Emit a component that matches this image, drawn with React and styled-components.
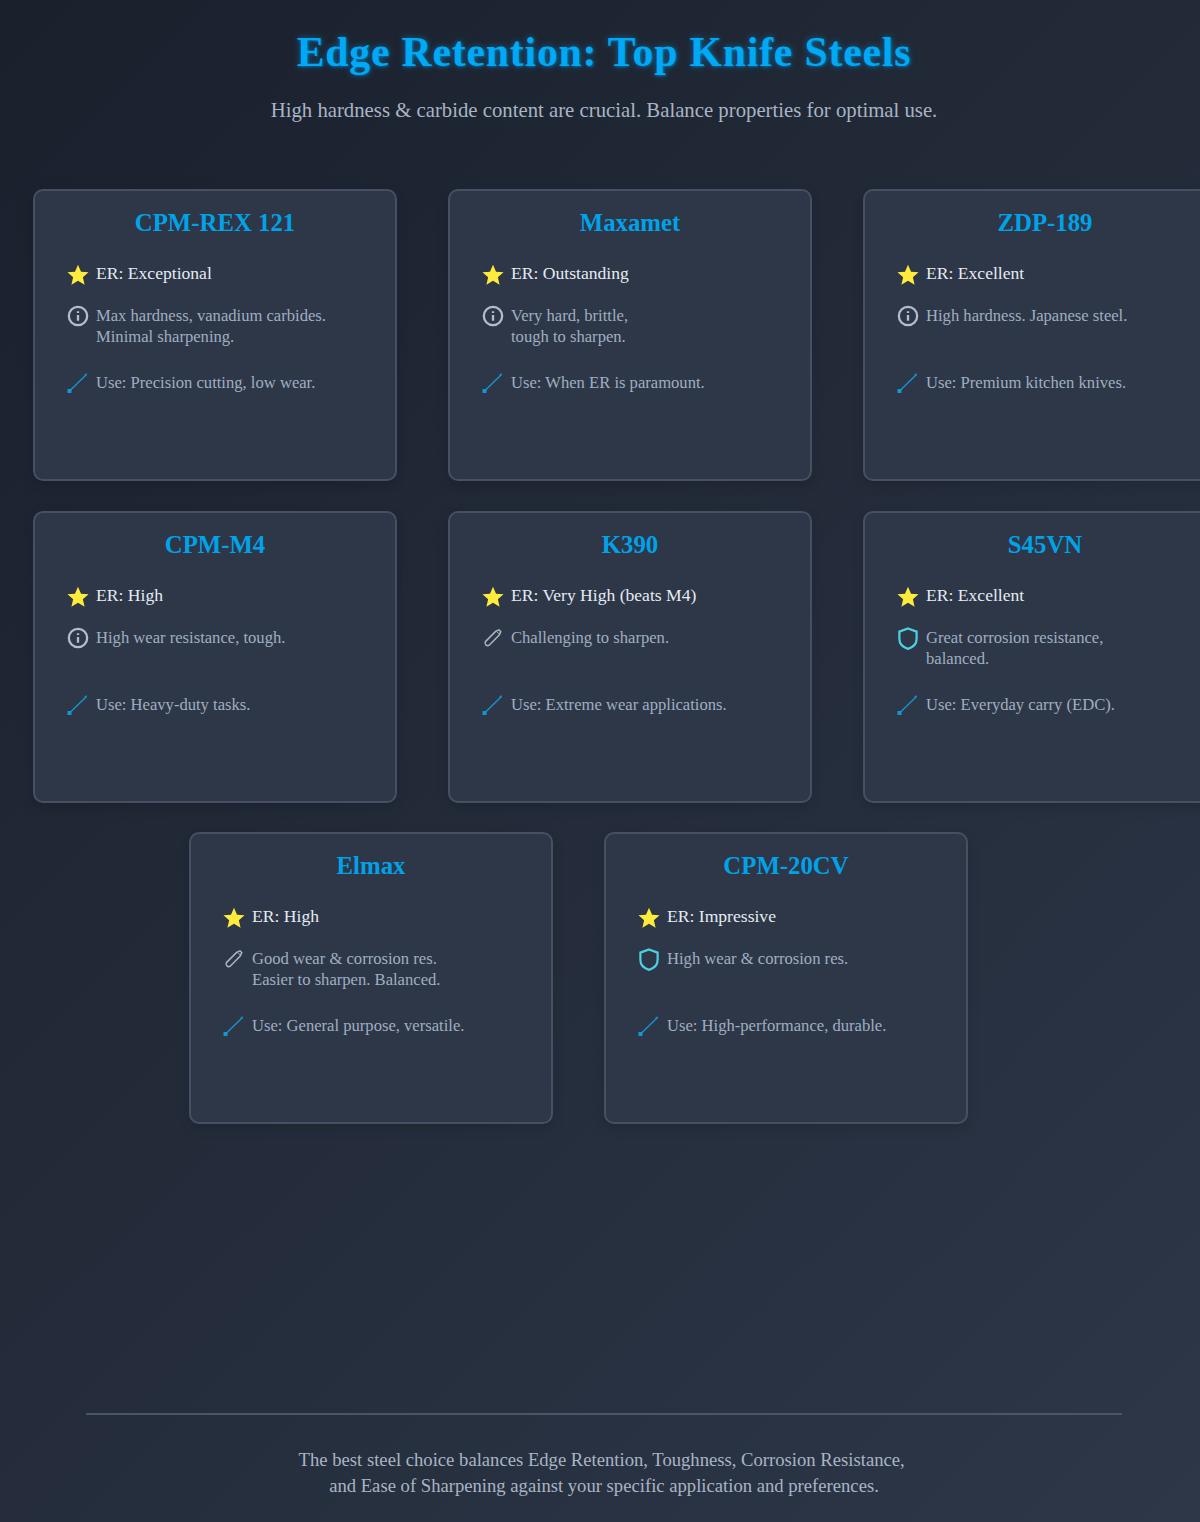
import React from 'react';
import styled, { createGlobalStyle } from 'styled-components';

const Global = createGlobalStyle`
  html, body { margin: 0; padding: 0; overflow-x: hidden; }
  body { font-family: "Liberation Serif", "Times New Roman", serif; background: #1f2633; }
`;
const Page = styled.div`
  width: 1200px; height: 1522px; overflow: hidden; display: flex; flex-direction: column;
  background: linear-gradient(135deg, #1a202c 0%, #2d3748 100%);
`;
const Header = styled.header`
  width: 1208px; padding-top: 29px; text-align: center; height: 189px; box-sizing: border-box; flex: none;
`;
const Title = styled.h1`
  margin: 0; font-size: 41.6px; line-height: 46px; font-weight: 700; color: #00a9f4;
  text-shadow: 0 0 6px rgba(0, 169, 244, 0.55), 1px 1px 2px rgba(0, 100, 170, 0.7);
  letter-spacing: 0.86px;
`;
const Subtitle = styled.p`
  margin: 23px 0 0; font-size: 20.76px; line-height: 24px; color: #a9b4c4;
`;
const Grid = styled.main`
  display: flex; flex-direction: column; gap: 29.5px; margin-left: 33px; width: 1091px; flex: none;
`;
const Row = styled.div`
  display: flex; gap: 51px; justify-content: ${p => (p.$centered ? 'center' : 'flex-start')};
`;
const Card = styled.article`
  flex: none; box-sizing: border-box; width: 364px; height: 292px; padding: 18px 32px;
  background: #2d3748; border: 2px solid #465062; border-radius: 10px;
  box-shadow: 0 4px 12px rgba(0, 0, 0, 0.15);
`;
const CardTitle = styled.h2`
  margin: 0 0 26px; font-size: 24.8px; line-height: 28px; font-weight: 700; color: #00a2e8; text-align: center;
`;
const Item = styled.div`
  display: flex; gap: 7px; align-items: flex-start;
  min-height: ${p => p.$min || 0}px; margin-bottom: ${p => p.$mb || 0}px;
`;
const IconBox = styled.span`
  flex: none; width: 22px; height: 22px; margin-top: ${p => p.$top ?? 1}px; display: block;
  svg { display: block; }
`;
const Rating = styled.span`font-size: 17.6px; line-height: 21px; color: #e6ebf2;`;
const Text = styled.span`font-size: 16.6px; line-height: 21px; color: #a0aec0;`;
const Footer = styled.footer`
  width: 1036px; margin: auto 0 0 86px; box-sizing: border-box; height: 109px; flex: none;
  border-top: 2px solid #4a5568; padding-top: 32px; text-align: center;
  font-size: 18.65px; line-height: 26px; color: #a9b4c4;
`;

const Star = () => (
  <svg width="22" height="22" viewBox="0 0 24 24"><path fill="#ffeb3b" d="M12 0.8l3.3 7.6 8.2.7-6.2 5.4 1.9 8.1L12 18.3l-7.2 4.3 1.9-8.1L.5 9.1l8.2-.7z" /></svg>
);
const Info = () => (
  <svg width="22" height="22" viewBox="0 0 24 24" fill="none" stroke="#b4becb" strokeWidth="2.5"><circle cx="12" cy="12" r="10" /><path d="M12 11v6.2M12 6.800v2" /></svg>
);
const Pen = () => (
  <svg width="22" height="22" viewBox="0 0 22 22" fill="none" stroke="#a9b4c4" strokeWidth="1.5"><path d="M3.400 14.600L13.600 4.400l3.400-1.600 1.800 1.800-1.600 3.400L7.200 18.200a2.700 2.700 0 0 1-3.800-3.600z" /><path d="M14.600 4.400l3 3" strokeWidth="1" /></svg>
);
const Shield = () => (
  <svg width="22" height="23" viewBox="0 0 24 25" fill="none" stroke="#4dd0e1" strokeWidth="2.4"><path d="M12 1.600 21.400 5v8c0 5.400-4 9-9.400 10.800C6.600 22 2.600 18.400 2.600 13V5z" /></svg>
);
const Cut = () => (
  <svg width="22" height="22" viewBox="0 0 22 22" fill="none"><path d="M2 19.500L19.500 2.500" stroke="#1399d2" strokeWidth="1.300" /><rect x="0.500" y="17" width="4" height="4" fill="#1399d2" /><path d="M17 3l3-2-1 3z" fill="#1399d2" /></svg>
);

const icons = { info: <Info />, pen: <Pen />, shield: <Shield /> };

const rows = [
  [
    { n: 'CPM-REX 121', er: 'Exceptional', i: 'info', d: ['Max hardness, vanadium carbides.', 'Minimal sharpening.'], u: 'Precision cutting, low wear.' },
    { n: 'Maxamet', er: 'Outstanding', i: 'info', d: ['Very hard, brittle,', 'tough to sharpen.'], u: 'When ER is paramount.' },
    { n: 'ZDP-189', er: 'Excellent', i: 'info', d: ['High hardness. Japanese steel.'], u: 'Premium kitchen knives.' },
  ],
  [
    { n: 'CPM-M4', er: 'High', i: 'info', d: ['High wear resistance, tough.'], u: 'Heavy-duty tasks.' },
    { n: 'K390', er: 'Very High (beats M4)', i: 'pen', d: ['Challenging to sharpen.'], u: 'Extreme wear applications.' },
    { n: 'S45VN', er: 'Excellent', i: 'shield', d: ['Great corrosion resistance,', 'balanced.'], u: 'Everyday carry (EDC).' },
  ],
  [
    { n: 'Elmax', er: 'High', i: 'pen', d: ['Good wear & corrosion res.', 'Easier to sharpen. Balanced.'], u: 'General purpose, versatile.' },
    { n: 'CPM-20CV', er: 'Impressive', i: 'shield', d: ['High wear & corrosion res.'], u: 'High-performance, durable.' },
  ],
];

export default function App() {
  return (
    <Page>
      <Global />
      <Header>
        <Title>Edge Retention: Top Knife Steels</Title>
        <Subtitle>High hardness &amp; carbide content are crucial. Balance properties for optimal use.</Subtitle>
      </Header>
      <Grid>
        {rows.map((r, idx) => (
          <Row key={idx} $centered={idx === 2}>
            {r.map(c => (
              <Card key={c.n}>
                <CardTitle>{c.n}</CardTitle>
                <Item $mb={19}><IconBox><Star /></IconBox><Rating>ER: {c.er}</Rating></Item>
                <Item $min={42} $mb={25}><IconBox $top={0}>{icons[c.i]}</IconBox><Text>{c.d.map((l, i) => <React.Fragment key={i}>{i > 0 && <br />}{l}</React.Fragment>)}</Text></Item>
                <Item><IconBox $top={0}><Cut /></IconBox><Text>Use: {c.u}</Text></Item>
              </Card>
            ))}
          </Row>
        ))}
      </Grid>
      <Footer>The best steel choice balances Edge Retention, Toughness, Corrosion Resistance,{'\u00a0'}<br />and Ease of Sharpening against your specific application and preferences.</Footer>
    </Page>
  );
}
